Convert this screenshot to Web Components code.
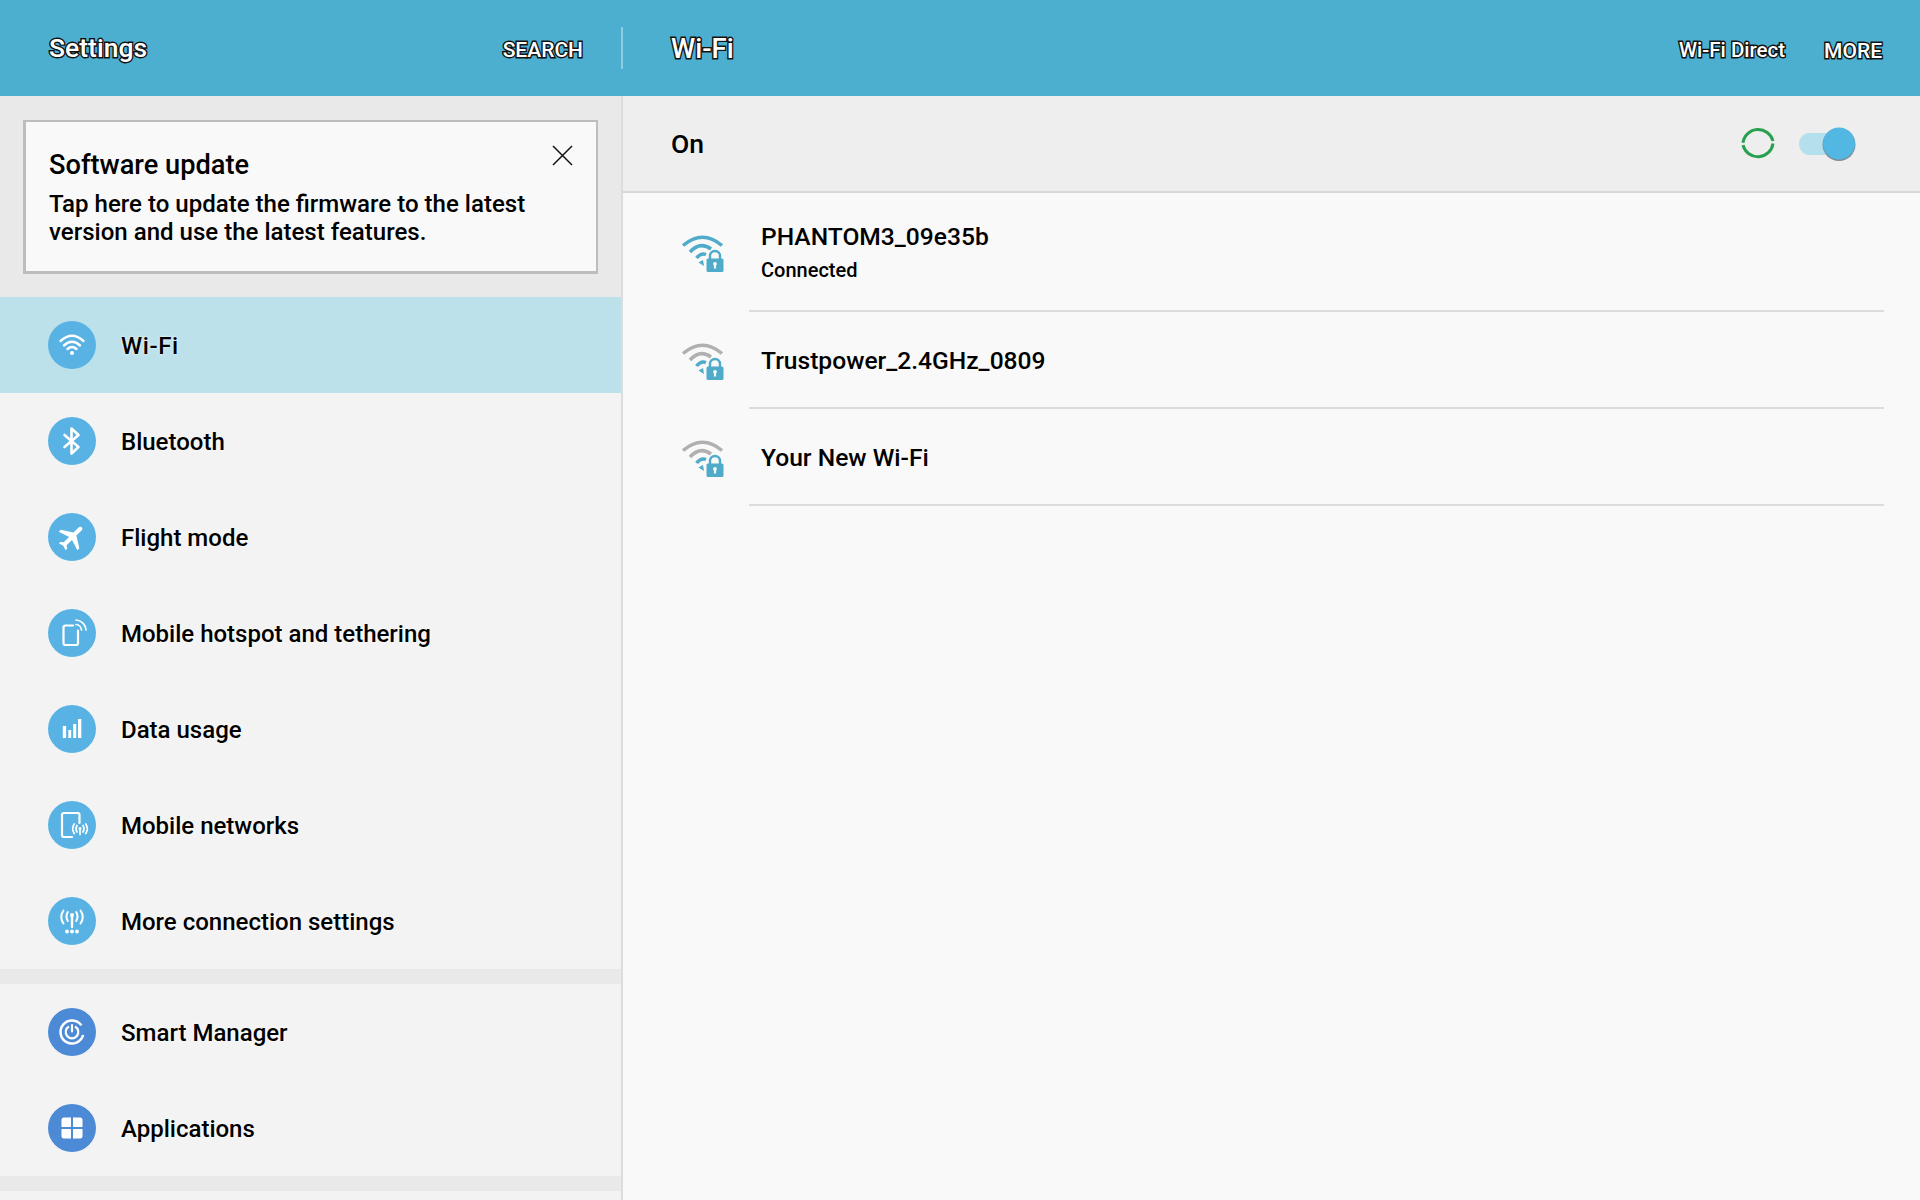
<!DOCTYPE html>
<html><head><meta charset="utf-8">
<style>
html,body{margin:0;padding:0;height:100%;background:#f9f9f9;overflow:hidden}
body{font-family:Roboto,"Liberation Sans",sans-serif}
</style></head>
<body>
<settings-app></settings-app>
<script>
function def(name, css, html){
  customElements.define(name, class extends HTMLElement{
    connectedCallback(){
      if(this.shadowRoot) return;
      const r=this.attachShadow({mode:'open'});
      r.innerHTML='<style>'+css+'</style>'+(typeof html==='function'?html(this):html);
    }
  });
}
const ICONS={
 wifi:'<g fill="none" stroke="#fff" stroke-width="2.4" stroke-linecap="round"><path d="M12.5 20Q24 9.500 35.500 20"/><path d="M16 24.500Q24 17 32 24.500"/><path d="M19.500 28Q24 24 28.500 28"/></g><circle cx="24" cy="32" r="2" fill="#fff"/>',
 bt:'<path d="M16.500 18 30.500 30 23.500 36.500V11.500L30.500 18 16.500 30" fill="none" stroke="#fff" stroke-width="2.600" stroke-linejoin="round" stroke-linecap="round"/>',
 plane:'<path transform="translate(24 24) rotate(45) scale(1.38) translate(-11.500 -12)" fill="#fff" d="M21 16v-2l-8-5V3.500c0-.83-.67-1.500-1.500-1.500S10 2.670 10 3.500V9l-8 5v2l8-2.500V19l-2 1.500V22l3.500-1 3.500 1v-1.500L13 19v-5.500l8 2.500z"/>',
 hotspot:'<g fill="none" stroke="#fff" stroke-linecap="round"><path stroke-width="2.200" d="M25 16.500H17.500a2 2 0 0 0-2 2V34a2 2 0 0 0 2 2H28a2 2 0 0 0 2-2V21.500"/><path stroke-width="1.700" d="M28 15.500A6 6 0 0 1 33.500 21"/><path stroke-width="1.700" d="M28 11A10.500 10.500 0 0 1 38 21"/></g>',
 data:'<g fill="#fff"><rect x="14.800" y="21" width="3.300" height="12"/><rect x="20.300" y="25" width="2.900" height="8"/><rect x="25.200" y="19" width="3" height="14"/><rect x="30" y="14" width="3.300" height="19"/></g>',
 net:'<g fill="none" stroke="#fff" stroke-linecap="round"><path stroke-width="2.200" d="M24 36H16a2 2 0 0 1-2-2V14a2 2 0 0 1 2-2H29.500a2 2 0 0 1 2 2V22"/><path stroke-width="1.700" d="M32 28v5.500M29 24.500q-2 3.200 0 6.500M35 24.500q2 3.200 0 6.500M26.200 23q-3 5 0 9.500M37.800 23q3 5 0 9.500"/></g><circle cx="32" cy="27.500" r="1.500" fill="#fff"/>',
 more:'<g fill="none" stroke="#fff" stroke-linecap="round"><path stroke-width="2.400" d="M24 19v11"/><path stroke-width="2" d="M19.800 15q-2.600 4.500 0 9M28.200 15q2.600 4.500 0 9M15.500 13.500q-4.500 6.500 0 13M32.500 13.500q4.500 6.500 0 13"/></g><circle cx="24" cy="18" r="2" fill="#fff"/><g fill="#fff"><circle cx="19" cy="34.500" r="1.900"/><circle cx="24" cy="34.500" r="1.900"/><circle cx="29" cy="34.500" r="1.900"/></g>',
 smart:'<g fill="none" stroke="#fff"><path stroke-width="2.500" d="M35.100 27A11.500 11.500 0 1 1 33.400 17.400"/><path stroke-width="2.200" d="M21 18.500a6.300 6.300 0 1 0 6 0"/><path stroke-width="2.200" stroke-linecap="round" d="M24 17v6.500"/></g>',
 apps:'<path fill="#fff" d="M13.500 16a2.500 2.500 0 0 1 2.500-2.500h7V23H13.500zM25 13.500h7a2.500 2.500 0 0 1 2.500 2.500V23H25zM13.500 25H23v9.500h-7a2.500 2.500 0 0 1-2.500-2.500zM25 25h9.500v7a2.500 2.500 0 0 1-2.500 2.500h-7z"/>'
};
def('nav-item',`
 :host{display:flex;align-items:center;height:96px;padding-left:48px;box-sizing:border-box;font:500 24px Roboto,sans-serif;color:#000}
 :host([active]){background:#bde1ea;letter-spacing:.6px}
 svg{width:48px;height:48px;flex:none;margin-right:25px;display:block}
 span{text-shadow:0 0 3px #fff;padding-top:2px}
`,h=>`<svg viewBox="0 0 48 48"><circle cx="24" cy="24" r="24" fill="${h.getAttribute('tint')||'#58b3e4'}"/>${ICONS[h.getAttribute('icon')]}</svg><span><slot></slot></span>`);
def('update-card',`
 :host{display:block;background:#e9e9e9;padding:24px 23px 0 23px;height:201px;box-sizing:border-box}
 .c{position:relative;height:154px;box-sizing:border-box;background:#f9f9f9;border:solid #bdbdbd;border-width:2px 2px 3px 3px;padding:26px 23px;color:#000}
 h2{margin:0;font:500 27.200px/34px Roboto,sans-serif}
 p{margin:8px 0 0;font:500 24.050px/28px Roboto,sans-serif}
 svg{position:absolute;left:526px;top:23px;width:21px;height:21px}
`,`<div class="c"><h2>Software update</h2><p>Tap here to update the firmware to the latest<br>version and use the latest features.</p><svg viewBox="0 0 21 21"><path d="M1 1 20 20M20 1 1 20" stroke="#111" stroke-width="1.500" fill="none"/></svg></div>`);
def('section-gap',`:host{display:block;height:15px;background:#e9e9e9}`,'');
def('bar-label',`
 :host{display:inline-block;color:#fff;font-family:Roboto,sans-serif;font-weight:500;font-size:var(--fs,20px);-webkit-text-stroke:2.800px #111;paint-order:stroke fill;line-height:1;white-space:nowrap}
`,'<slot></slot>');
def('wifi-glyph',`
 :host{display:block;width:41px;height:38px;flex:none;margin-top:4px}
 svg{display:block;width:41px;height:38px;overflow:visible}
`,h=>{
  const a=h.getAttribute('tint')||'#b0b0b0', b=h.getAttribute('inner')||'#b0b0b0';
  return `<svg viewBox="0 0 41 38"><g fill="none" stroke-width="3.500">
   <path stroke="${a}" d="M1 10.500Q20.500 -6 40 10.500"/>
   <path stroke="${b==='m'?'#4fabc9':a}" d="M8 17Q18 6 29 14"/>
   <path stroke="#4fabc9" d="M14.500 23Q19 17.500 24 19.500"/></g>
   <path fill="#4fabc9" d="M16.500 27.500 21 25 22 31z"/>
   <path fill="none" stroke="#4fabc9" stroke-width="2.400" d="M28 24.500V21a5 5 0 0 1 10 0V24.500"/>
   <path fill="#4fabc9" fill-rule="evenodd" d="M26 23.500h14a1.500 1.500 0 0 1 1.500 1.500V35.500a1.500 1.500 0 0 1-1.500 1.500H26a1.500 1.500 0 0 1-1.500-1.500V25a1.500 1.500 0 0 1 1.500-1.500zM33 27a1.900 1.900 0 0 0-1.100 3.400V33.500h2.200V30.400A1.900 1.900 0 0 0 33 27z"/></svg>`;
});
def('wifi-row',`
 :host{display:flex;align-items:center;box-sizing:border-box;height:var(--h,97px);padding-left:59px;position:relative}
 .t{margin-left:38px;color:#000;padding-top:var(--tp,2px)}
 .n{font:500 24.600px/30px Roboto,sans-serif}
 .s{font:500 20px/26px Roboto,sans-serif;margin-top:5px}
 .l{position:absolute;left:126px;right:36px;bottom:-1px;height:2px;background:#dcdcdc}
`,h=>`<wifi-glyph tint="${h.getAttribute('tint')||''}" inner="${h.getAttribute('inner')||''}"></wifi-glyph><div class="t"><div class="n"><slot></slot></div>${h.getAttribute('status')?`<div class="s">${h.getAttribute('status')}</div>`:''}</div><div class="l"></div>`);
def('state-bar',`
 :host{display:flex;align-items:center;height:97px;box-sizing:border-box;background:#eee;border-bottom:2px solid #d8d8d8;padding:0 61px 0 48px;font:500 26.500px Roboto,sans-serif;color:#000}
 span{flex:1}
 svg{display:block}
 .sp{margin-right:24px}
`,`<span>On</span><svg class="sp" width="34" height="34" viewBox="0 0 34 34"><g fill="none" stroke="#27a050" stroke-width="3"><path d="M32 14A15.300 15.300 0 0 0 2 15.800"/><path d="M2 18.200A15.300 15.300 0 0 0 32 16.500"/></g></svg>
 <svg width="60" height="36" viewBox="0 0 60 36" style="overflow:visible"><rect x="0" y="7" width="50" height="22" rx="11" fill="#b4dfec"/><circle cx="40" cy="18.500" r="16.500" fill="#7d8f96"/><circle cx="40" cy="17.500" r="16" fill="#52b7e2"/></svg>`);
def('top-bar',`
 :host{display:flex;height:96px;background:#4dafd0;flex:none}
 .l{width:621px;display:flex;align-items:center;padding:0 38px 0 49px;box-sizing:border-box;position:relative}
 .l bar-label:first-child{flex:1}
 .d{width:2px;height:42px;background:#8fcde2;align-self:flex-start;margin-top:27px;flex:none}
 .r{flex:1;display:flex;align-items:center;padding:0 38px 0 48px}
 .r bar-label:first-child{margin-right:auto}
 .r bar-label + bar-label{margin-left:39px}
`,`<div class="l"><bar-label style="--fs:26.500px">Settings</bar-label><bar-label style="--fs:21px;padding-top:4px">SEARCH</bar-label></div><div class="d"></div>
 <div class="r"><bar-label style="--fs:27.500px;padding-top:2px">Wi-Fi</bar-label><bar-label style="--fs:20.500px;padding-top:5px">Wi-Fi Direct</bar-label><bar-label style="--fs:21px;padding-top:7px">MORE</bar-label></div>`);
def('side-panel',`
 :host{display:block;width:621px;flex:none;background:#f3f3f3;border-right:2px solid #dcdcdc;box-sizing:content-box;overflow:hidden}
`,`<update-card></update-card>
 <nav-item icon="wifi" active>Wi-Fi</nav-item>
 <nav-item icon="bt">Bluetooth</nav-item>
 <nav-item icon="plane">Flight mode</nav-item>
 <nav-item icon="hotspot">Mobile hotspot and tethering</nav-item>
 <nav-item icon="data">Data usage</nav-item>
 <nav-item icon="net">Mobile networks</nav-item>
 <nav-item icon="more">More connection settings</nav-item>
 <section-gap></section-gap>
 <nav-item icon="smart" tint="#4d8ad6">Smart Manager</nav-item>
 <nav-item icon="apps" tint="#4d8ad6">Applications</nav-item>
 <section-gap></section-gap>`);
def('wifi-panel',`
 :host{display:block;flex:1;background:#f9f9f9;min-width:0}
`,`<state-bar></state-bar>
 <wifi-row style="--h:118px;--tp:0px" tint="#4fabc9" inner="m" status="Connected">PHANTOM3_09e35b</wifi-row>
 <wifi-row>Trustpower_2.4GHz_0809</wifi-row>
 <wifi-row>Your New Wi-Fi</wifi-row>`);
def('settings-app',`
 :host{display:flex;flex-direction:column;height:100vh;overflow:hidden}
 .m{display:flex;flex:1;min-height:0}
`,`<top-bar></top-bar><div class="m"><side-panel></side-panel><wifi-panel></wifi-panel></div>`);
</script>
</body></html>
